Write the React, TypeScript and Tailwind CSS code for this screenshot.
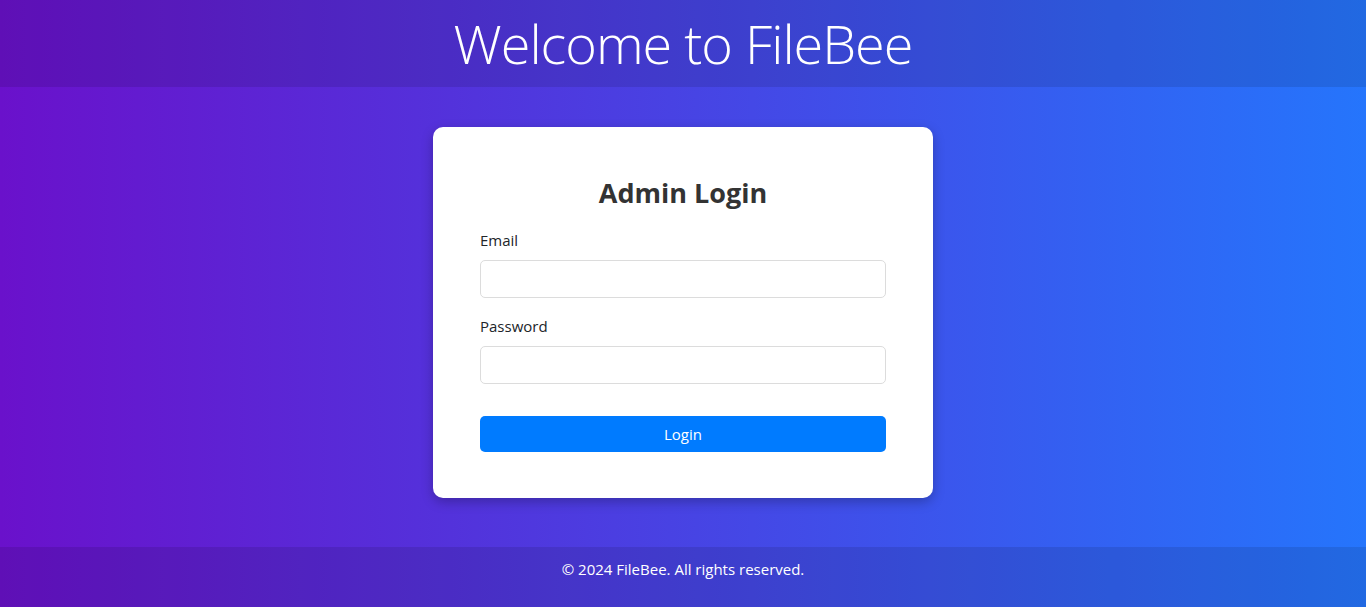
export default function App() {
  return (
    <div
      className="min-h-screen flex flex-col bg-[linear-gradient(to_right,#6a11cb,#2575fc)] text-[#212529]"
      style={{ fontFamily: '"Open Sans", "Noto Sans", sans-serif' }}
    >
      <header className="bg-black/10 py-[10px] text-center">
        <h1 className="text-[54px] leading-[67px] font-light text-white tracking-[-1px]">Welcome to FileBee</h1>
      </header>

      <main className="flex-1 flex justify-center pt-[40px] pb-[49px]">
        <div className="w-[500px] bg-white rounded-[10px] px-[47px] pt-[49px] pb-[46px] shadow-[0_4px_12px_rgba(0,0,0,0.25)]">
          <h2 className="text-[27px] leading-[1.25] font-bold text-[#333] text-center mb-[18px]">Admin Login</h2>
          <form onSubmit={(e) => e.preventDefault()}>
            <div className="mb-4">
              <label className="block text-[15px] leading-6 mb-2">Email</label>
              <input
                type="email"
                className="block w-full h-[38px] rounded-[5px] border border-[#dcdcdc] px-3 outline-none"
              />
            </div>
            <div className="mb-4">
              <label className="block text-[15px] leading-6 mb-2">Password</label>
              <input
                type="password"
                className="block w-full h-[38px] rounded-[5px] border border-[#dcdcdc] px-3 outline-none"
              />
            </div>
            <button
              type="submit"
              className="mt-8 block w-full h-[36px] rounded-[5px] bg-[#007bff] text-white text-[15px] leading-6"
            >
              Login
            </button>
          </form>
        </div>
      </main>

      <footer className="bg-black/10 h-[60px] pt-[10px] text-center text-white text-[15px] leading-6">
        © 2024 FileBee. All rights reserved.
      </footer>
    </div>
  );
}
